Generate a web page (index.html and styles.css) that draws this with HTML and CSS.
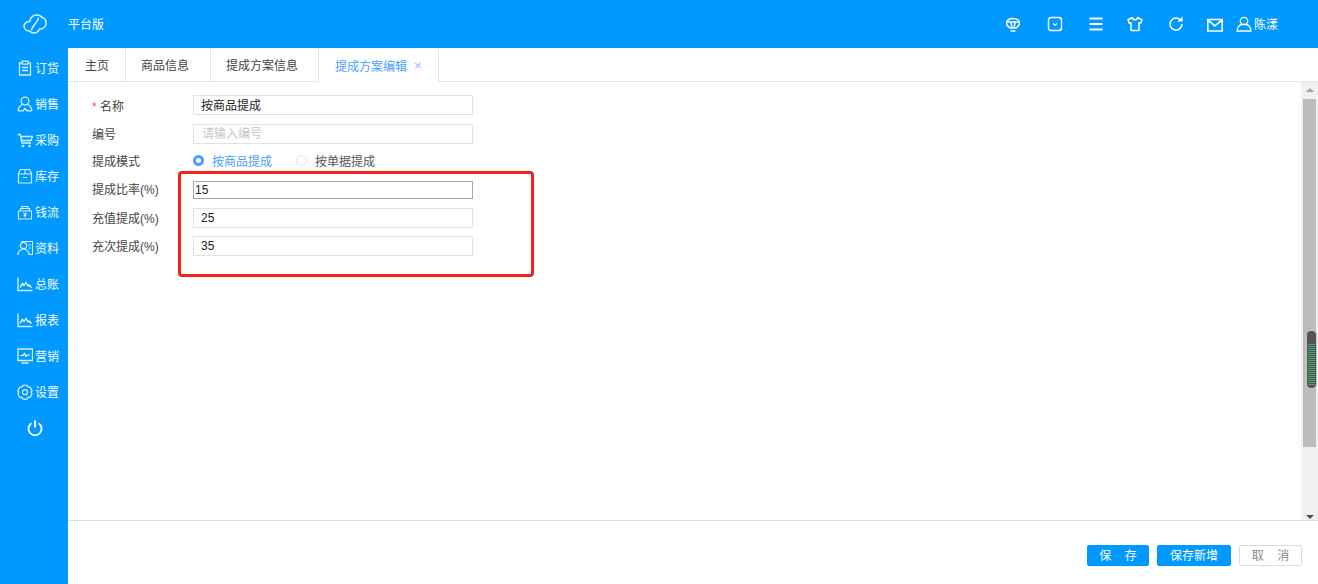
FILE: index.html
```html
<!DOCTYPE html>
<html lang="zh-CN">
<head>
<meta charset="utf-8">
<title>提成方案编辑</title>
<link rel="stylesheet" href="styles.css">
</head>
<body>
<div class="app">
  <header class="topbar">
    <div class="brand">
      <svg class="logo" viewBox="0 0 24 20" width="24" height="20"><path d="M6.500 7.500C7.500 3.500 10.500 1 14 1c2.500 0 4 1 5 2.500 2.500.5 4 3 4 5.500 0 3.500-2.500 6-6 6h-.5c-1 2.500-3 4-5.500 4-2 0-3.500-.8-4.500-2C3.500 17 1 15 1 12c0-2.500 2.500-4.500 5.500-4.500z M15.500 3.500C15.500 8 8.500 12 8.500 16.500" fill="none" stroke="#d9f0ff" stroke-width="1.500" stroke-linejoin="round"/></svg>
      <span class="brand-name">平台版</span>
    </div>
    <div class="tools">
      <svg class="tool tool-1" viewBox="0 0 16 16" width="16" height="16"><path d="M5 11C2.800 9.500 1.500 8 1.500 6 1.500 3.200 4.500 1.500 8 1.500s6.500 1.700 6.500 4.500c0 2-1.300 3.500-3.500 5H5z M2.500 5h11 M6 5.500l1 5.500 M10 5.500 9 11 M5.500 14h5" fill="none" stroke="#fff" stroke-width="1.400"/></svg>
      <svg class="tool tool-2" viewBox="0 0 16 16" width="16" height="16"><rect x="1.500" y="1.500" width="13" height="13" rx="2.500" fill="none" stroke="#fff" stroke-width="1.400"/><path d="M6 7.500 8 9.200l2-1.700" fill="none" stroke="#fff" stroke-width="1.200"/></svg>
      <svg class="tool tool-3" viewBox="0 0 16 16" width="16" height="16"><path d="M1.500 2.500h13 M1.500 8h13 M1.500 13.500h13" stroke="#fff" stroke-width="2" fill="none"/></svg>
      <svg class="tool tool-4" viewBox="0 0 16 16" width="16" height="16"><path d="M5.300 1.500 1 4l1.300 3.300 1.700-.7v8h8v-8l1.700.7L15 4l-4.300-2.500C10.300 3 9.300 3.800 8 3.800S5.700 3 5.300 1.500z" fill="none" stroke="#fff" stroke-width="1.500" stroke-linejoin="round"/></svg>
      <svg class="tool tool-5" viewBox="0 0 16 16" width="16" height="16"><path d="M12.800 4.500A6 6 0 1 0 14 8" fill="none" stroke="#fff" stroke-width="1.500"/><path d="M9.500 5.500h5v-5z" fill="#fff"/></svg>
      <svg class="tool tool-6" viewBox="0 0 16 16" width="16" height="16"><path d="M.8 2.500h14.400v11.500H.8z M1 3l7 6 7-6" fill="none" stroke="#fff" stroke-width="1.700"/></svg>
      <div class="user">
        <svg viewBox="0 0 16 16" width="16" height="16"><circle cx="8" cy="5" r="3.700" fill="none" stroke="#fff" stroke-width="1.300"/><path d="M1 15c0-3.500 2.500-6 4.500-6.500h5C12.500 9 15 11.500 15 15z" fill="none" stroke="#fff" stroke-width="1.300"/></svg>
        <span>陈漾</span>
      </div>
    </div>
  </header>

  <div class="body">
    <nav class="sidebar">
      <a class="nav"><svg viewBox="0 0 16 16" width="16" height="16"><path d="M5 2.800H2.500v12.200h11V2.800H11 M5 1.200h6v3H5z M5 7.500h6 M5 10.500h6" fill="none" stroke="#d6eeff" stroke-width="1.300"/></svg><span>订货</span></a>
      <a class="nav"><svg viewBox="0 0 16 16" width="16" height="16"><circle cx="8" cy="5" r="3.800" fill="none" stroke="#d6eeff" stroke-width="1.300"/><path d="M5.500 8.500C3 9.500 1.300 12 1.300 14.800h4.700L8 12.500l2 2.300h4.700C14.700 12 13 9.500 10.500 8.500" fill="none" stroke="#d6eeff" stroke-width="1.300" stroke-linejoin="round"/></svg><span>销售</span></a>
      <a class="nav"><svg viewBox="0 0 16 16" width="16" height="16"><path d="M.5 2.500h2.800l1.700 8.500h9 M3.500 4.500h12l-1.500 4H4.500" fill="none" stroke="#d6eeff" stroke-width="1.300"/><circle cx="6" cy="14" r="1.300" fill="#d6eeff"/><circle cx="12.500" cy="14" r="1.300" fill="#d6eeff"/></svg><span>采购</span></a>
      <a class="nav"><svg viewBox="0 0 16 16" width="16" height="16"><path d="M3.500 1.500h9l2 4v9.500h-13V5.500z M1.500 6h13 M8 1.500V6 M6 9.500h4" fill="none" stroke="#d6eeff" stroke-width="1.200"/></svg><span>库存</span></a>
      <a class="nav"><svg viewBox="0 0 16 16" width="16" height="16"><path d="M1.500 7h13v8h-13z M3.500 7V4.500h9V7 M5 4.500V2.500h6v2 M6.500 9 8 10.500 9.500 9 M8 10.500V13.500 M6.500 11.500h3" fill="none" stroke="#d6eeff" stroke-width="1.100"/></svg><span>钱流</span></a>
      <a class="nav"><svg viewBox="0 0 16 16" width="16" height="16"><path d="M5 3V1.500h10.500v13H11.500 M11.500 5h2.500 M11.500 8h2.500" fill="none" stroke="#d6eeff" stroke-width="1.100"/><circle cx="6.500" cy="5.500" r="3.200" fill="none" stroke="#d6eeff" stroke-width="1.200"/><path d="M.8 15c0-3 2.500-6 5.700-6s5.700 3 5.700 6" fill="none" stroke="#d6eeff" stroke-width="1.200"/></svg><span>资料</span></a>
      <a class="nav"><svg viewBox="0 0 16 16" width="16" height="16"><path d="M1 1.500v13h14.500" fill="none" stroke="#d6eeff" stroke-width="1.300"/><path d="M3 11.500l2.500-4 1.500 2 2-3 2 3.500 1-1 2.500 2.500" fill="none" stroke="#fff" stroke-width="1.300"/></svg><span>总账</span></a>
      <a class="nav"><svg viewBox="0 0 16 16" width="16" height="16"><path d="M1 1.500v13h14.500" fill="none" stroke="#d6eeff" stroke-width="1.300"/><path d="M3 11.500l2.500-4 1.500 2 2-3 2 3.500 1-1 2.500 2.500" fill="none" stroke="#fff" stroke-width="1.300"/></svg><span>报表</span></a>
      <a class="nav"><svg viewBox="0 0 16 16" width="16" height="16"><path d="M1 1h14.500v11.500H1z M4.500 15h7" fill="none" stroke="#d6eeff" stroke-width="1.300"/><path d="M3.500 7.500h2.500l1.500-2 1.500 3 1.500-1.500h2.500" fill="none" stroke="#fff" stroke-width="1.200"/></svg><span>营销</span></a>
      <a class="nav"><svg viewBox="0 0 16 16" width="16" height="16"><path d="M5.700 1.500c1.500-.7 3-.7 4.600 0l.7 1.700 1.900-.2c1 1.200 1.800 2.500 2.100 4L14 8.200l1 1.500c-.4 1.500-1.100 2.800-2.100 3.800l-1.900-.3-.7 1.700c-1.500.6-3 .6-4.600 0l-.7-1.700-1.900.3c-1-1-1.700-2.300-2.100-3.800l1-1.500L.9 7c.4-1.500 1.100-2.800 2.200-4l1.900.2z" fill="none" stroke="#d6eeff" stroke-width="1.200" stroke-linejoin="round"/><circle cx="8" cy="8.200" r="2.500" fill="none" stroke="#d6eeff" stroke-width="1.200"/></svg><span>设置</span></a>
      <a class="nav nav-power"><svg viewBox="0 0 16 16" width="16" height="16"><path d="M4.500 3.300a6.500 6.500 0 1 0 7 0" fill="none" stroke="#fff" stroke-width="1.800"/><path d="M8 .5v7" stroke="#fff" stroke-width="1.900"/></svg></a>
    </nav>

    <main class="main">
      <div class="tabs">
        <div class="tab tab-home">主页</div>
        <div class="tab tab-goods">商品信息</div>
        <div class="tab tab-plan">提成方案信息</div>
        <div class="tab tab-active">提成方案编辑<span class="close">×</span></div>
      </div>

      <div class="content">
        <form class="form">
          <div class="row"><label class="label label-low"><i class="star">*</i> 名称</label><div class="field field-low">按商品提成</div></div>
          <div class="row"><label class="label label-low">编号</label><div class="field placeholder field-low field-code">请输入编号</div></div>
          <div class="row"><label class="label">提成模式</label>
            <div class="radios">
              <span class="radio radio-on"><i class="dot"></i>按商品提成</span>
              <span class="radio"><i class="dot"></i>按单据提成</span>
            </div>
          </div>
          <div class="row row-focus"><label class="label">提成比率(%)</label><div class="field focus">15</div></div>
          <div class="row"><label class="label">充值提成(%)</label><div class="field">25</div></div>
          <div class="row"><label class="label">充次提成(%)</label><div class="field">35</div></div>
        </form>
        <div class="highlight"></div>
        <div class="scrollbar">
          <div class="arrow-up"></div>
          <div class="thumb"></div>
          <div class="arrow-down"></div>
        </div>
        <div class="knob"></div>
      </div>

      <footer class="footer">
        <button class="btn btn-save" type="button">保&nbsp;&nbsp;&nbsp;&nbsp;存</button>
        <button class="btn btn-new" type="button">保存新增</button>
        <button class="btn btn-cancel" type="button">取&nbsp;&nbsp;&nbsp;&nbsp;消</button>
      </footer>
    </main>
  </div>
</div>
</body>
</html>
```
FILE: styles.css
```css
* { box-sizing: border-box; }
html, body { margin: 0; height: 100%; overflow: hidden; }
body {
  font-family: "Liberation Sans", "Noto Sans CJK SC", sans-serif;
  font-size: 12px;
  color: #333;
  background: #fff;
}
.app { display: flex; flex-direction: column; width: 1318px; height: 584px; }

.topbar {
  height: 48px;
  flex: none;
  background: #0099ff;
  display: flex;
  align-items: center;
  justify-content: space-between;
  color: #fff;
}
.brand { display: flex; align-items: center; padding-left: 23px; }
.logo { display: block; }
.brand-name { margin-left: 21px; margin-top: -2px; }
.tools { display: flex; align-items: center; padding-right: 40px; }
.tool { display: block; }
.tool-1 { margin-top: 1px; }
.tool-2 { margin-left: 26px; }
.tool-3 { margin-left: 25px; }
.tool-4 { margin-left: 23px; }
.tool-5 { margin-left: 25px; }
.tool-6 { margin-left: 23px; margin-top: 2px; }
.user { display: flex; align-items: center; margin-left: 13px; }
.user span { margin-left: 2px; margin-top: -2px; }

.body { flex: 1; display: flex; min-height: 0; }

.sidebar {
  width: 68px;
  flex: none;
  background: #0099ff;
  padding-top: 2px;
  display: flex;
  flex-direction: column;
}
.nav {
  height: 36px;
  display: flex;
  align-items: center;
  padding-left: 17px;
  color: #f7fcff;
}
.nav span { margin-left: 2px; margin-top: -2px; }
.nav-power { padding-left: 27px; }

.main { flex: 1; min-width: 0; display: flex; flex-direction: column; }

.tabs {
  height: 34px;
  flex: none;
  display: flex;
  border-bottom: 1px solid #e4e6ec;
  background: #fff;
}
.tab {
  height: 33px;
  display: flex;
  align-items: center;
  border-right: 1px solid #e4e6ec;
  color: #444;
}
.tab-home { width: 58px; padding-left: 17px; }
.tab-goods { width: 85px; padding-left: 15px; }
.tab-plan { width: 108px; padding-left: 15px; }
.tab-active {
  width: 120px;
  height: 34px;
  color: #4a9eff;
  background: #fff;
  border-radius: 3px 3px 0 0;
  padding-left: 16px;
}
.close { margin-left: 7px; font-size: 13px; color: #8fbcf0; }

.content { flex: 1; position: relative; min-height: 0; }

.form { padding-top: 9px; padding-left: 24px; }
.row { height: 28px; display: flex; align-items: center; }
.row-focus { height: 29px; }
.label { width: 101px; color: #444; margin-top: -2px; }
.label-low { margin-top: 0; }
.star { font-style: normal; color: #f05050; }
.field {
  width: 280px;
  height: 20px;
  border: 1px solid #e0e2e8;
  padding-left: 7px;
  line-height: 18px;
  color: #222;
  background: #fff;
}
.field-low { line-height: 20px; }
.field-code { margin-top: 2px; line-height: 18px; }
.placeholder { color: #c4c6cc; padding-left: 8px; }
.focus { border-color: #a9a9a9; padding-left: 1px; height: 18px; line-height: 16px; }

.radios { display: flex; align-items: center; margin-top: -2px; }
.radio { display: flex; align-items: center; width: 103px; color: #555; }
.dot {
  width: 11px;
  height: 11px;
  border-radius: 50%;
  border: 1px solid #e0e2e8;
  margin-right: 8px;
  background: #fff;
}
.radio-on { color: #4a9eff; }
.radio-on .dot { border: 3px solid #4a9eff; }

.highlight {
  position: absolute;
  left: 110px;
  top: 89px;
  width: 356px;
  height: 106px;
  border: 3px solid #f5201a;
  border-radius: 4px;
  pointer-events: none;
}

.scrollbar {
  position: absolute;
  right: 0;
  top: 0;
  bottom: 0;
  width: 17px;
  background: #f1f1f1;
  display: flex;
  flex-direction: column;
  align-items: center;
}
.arrow-up {
  margin-top: 6px;
  width: 0;
  height: 0;
  border-left: 4px solid transparent;
  border-right: 4px solid transparent;
  border-bottom: 4px solid #a3a3a3;
}
.thumb { width: 13px; height: 348px; margin-top: 7px; background: #bcbcbc; }
.arrow-down {
  margin-top: auto;
  margin-bottom: 1px;
  width: 0;
  height: 0;
  border-left: 4px solid transparent;
  border-right: 4px solid transparent;
  border-top: 4px solid #505050;
}
.knob {
  position: absolute;
  right: 2px;
  top: 249px;
  width: 9px;
  height: 57px;
  border-radius: 4px;
  background: repeating-linear-gradient(#3fa868 0 1px, #555 1px 2px);
  border-style: solid;
  border-color: #555;
  border-width: 13px 1px 2px;
  box-shadow: 0 0 0 1px #c9c9c9;
}

.footer {
  height: 64px;
  flex: none;
  border-top: 1px solid #dcdcdc;
  display: flex;
  justify-content: flex-end;
  align-items: flex-start;
  gap: 8px;
  padding: 24px 16px 0 0;
}
.btn {
  height: 21px;
  padding: 0 0 2px;
  font: inherit;
  border-radius: 2px;
  border: 1px solid #0099ff;
  background: #0099ff;
  color: #fff;
}
.btn-save { width: 62px; }
.btn-new { width: 74px; }
.btn-cancel { width: 63px; background: #fff; border-color: #dcdcdc; color: #888; }
```
